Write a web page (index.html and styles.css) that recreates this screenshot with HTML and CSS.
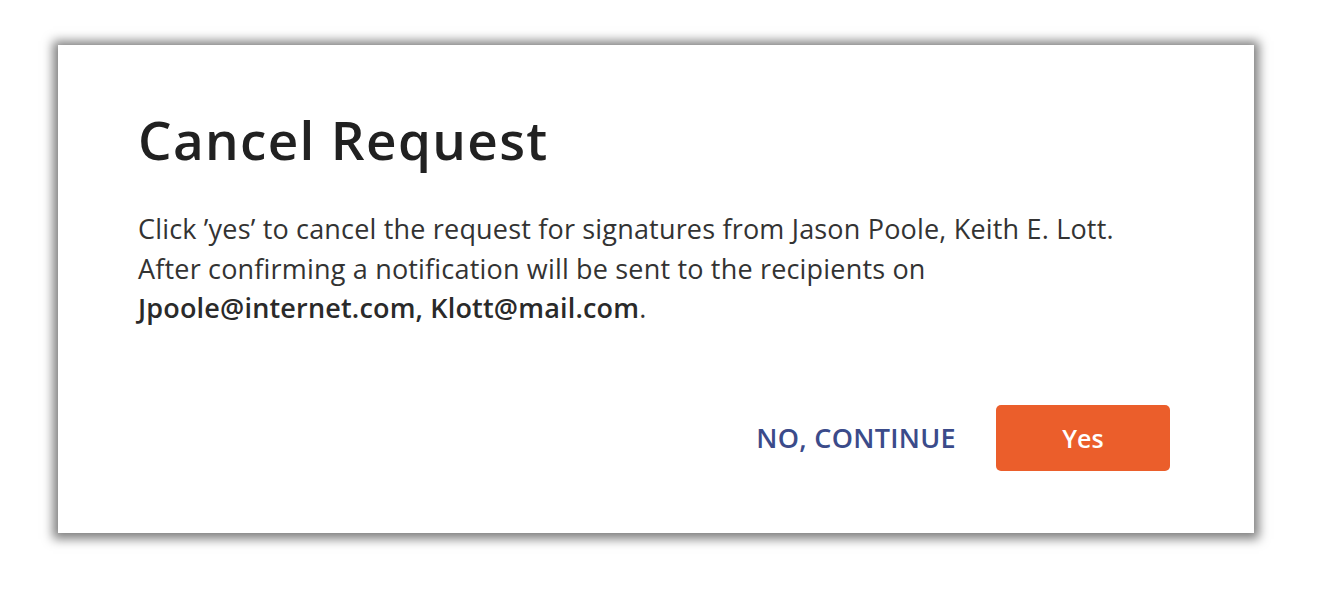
FILE: index.html
```html
<!DOCTYPE html>
<html lang="en">
<head>
<meta charset="utf-8">
<title>Cancel Request</title>
<link rel="stylesheet" href="styles.css">
</head>
<body>
  <div class="dialog" role="dialog" aria-labelledby="dlg-title">
    <h1 class="dialog-title" id="dlg-title">Cancel Request</h1>
    <p class="dialog-text">Click ’yes’ to cancel the request for signatures from Jason Poole, Keith E. Lott.<br>After confirming a notification will be sent to the recipients on<br><strong>Jpoole@internet.com, Klott@mail.com</strong>.</p>
    <div class="dialog-actions">
      <button class="btn-link" type="button">NO, CONTINUE</button>
      <button class="btn-primary" type="button">Yes</button>
    </div>
  </div>
</body>
</html>
```

FILE: styles.css
```css
html, body {
  margin: 0;
  padding: 0;
  background: #ffffff;
}

html {
  height: 100%;
}

body {
  box-sizing: border-box;
  min-height: 100%;
  padding: 45px 86px 0 58px;
  font-family: "Open Sans", "Liberation Sans", sans-serif;
}

.dialog {
  box-sizing: border-box;
  width: 1196px;
  height: 488px;
  background: #ffffff;
  box-shadow: 0 1px 10px 5px rgba(0, 0, 0, 0.5);
  padding: 0 84px 62px 80px;
  display: flex;
  flex-direction: column;
}

.dialog-title {
  margin: 0;
  padding-top: 63px;
  font-family: "Open Sans", "Liberation Sans", sans-serif;
  font-weight: 600;
  font-size: 53px;
  line-height: 64px;
  color: #212121;
  letter-spacing: 1.35px;
}

.dialog-text {
  margin: 37px 0 0 0;
  font-size: 27px;
  line-height: 39.5px;
  letter-spacing: 0.18px;
  color: #333333;
}

.dialog-text strong {
  font-weight: 600;
  color: #2a2a2a;
}

.dialog-actions {
  margin-top: auto;
  display: flex;
  justify-content: flex-end;
  align-items: center;
  gap: 40px;
}

.btn-link {
  background: none;
  border: none;
  padding: 0;
  font-family: "Open Sans", "Liberation Sans", sans-serif;
  font-weight: 600;
  font-size: 27px;
  line-height: 36px;
  letter-spacing: 0.3px;
  color: #3b4b8a;
  cursor: pointer;
}

.btn-primary {
  width: 174px;
  height: 66px;
  border: none;
  border-radius: 5px;
  background: #eb5e2b;
  color: #ffffff;
  font-family: "Open Sans", "Liberation Sans", sans-serif;
  font-weight: 600;
  font-size: 25px;
  cursor: pointer;
}
```
